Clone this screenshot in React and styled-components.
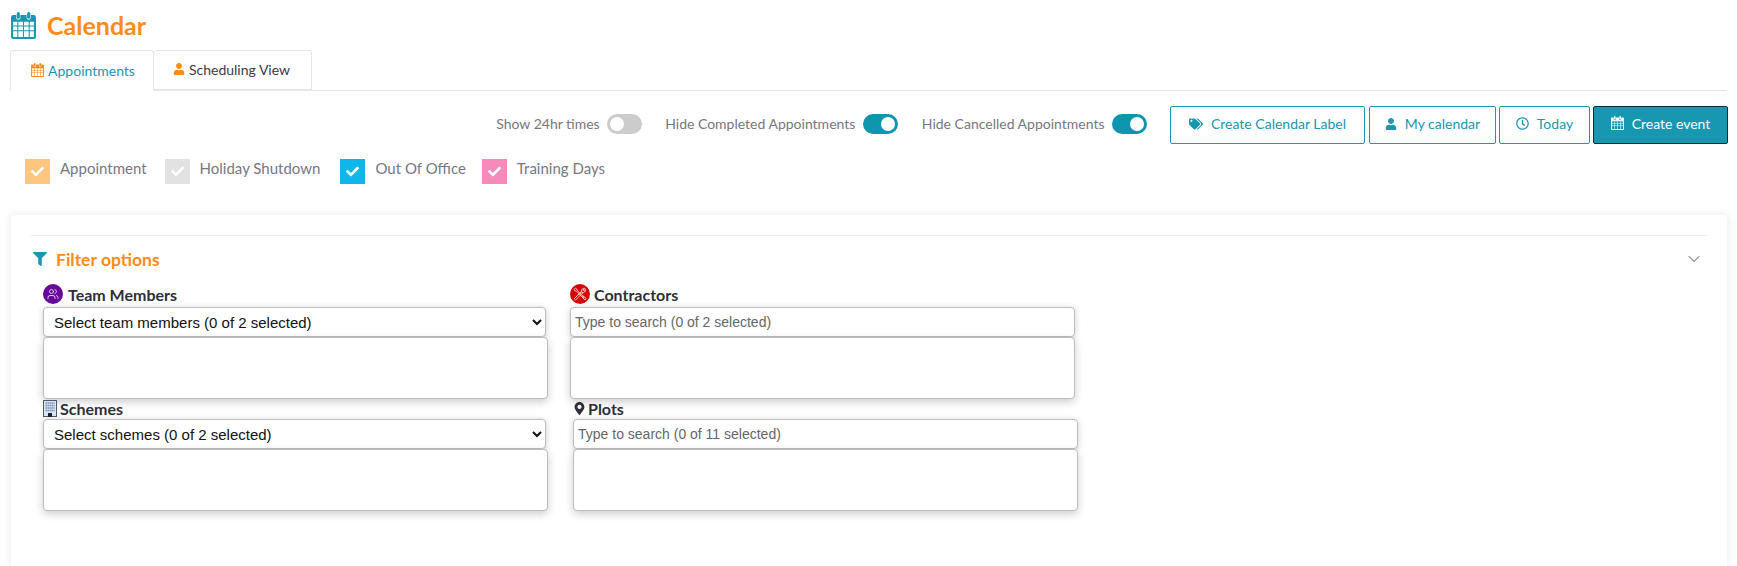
import styled, { createGlobalStyle } from 'styled-components';
import { FaTags, FaUser, FaRegClock, FaFilter, FaMapMarkerAlt, FaCheck } from 'react-icons/fa';
import { Users, ChevronDown } from 'lucide-react';

const GlobalStyle = createGlobalStyle`
    html, body {
        margin: 0;
        padding: 0;
        background: #FFF;
        font-family: Lato, "Open Sans", sans-serif;
    }
`;

const Page = styled.div`
    height: 566px;
    overflow: hidden;
    display: flex;
    flex-flow: column;
    padding: 0 10px 0 10px;
    box-sizing: border-box;
`;
const Header = styled.header`
    display: flex;
    align-items: center;
    gap: 11px;
    height: 50px;
    padding-left: 1px;
`;
const PageTitle = styled.h1`
    margin: 0;
    font-size: 25px;
    font-weight: 700;
    color: #FF8C1A;
`;
const Tabs = styled.nav`
    display: flex;
    height: 41px;
    box-sizing: border-box;
    border-bottom: 1px solid #E4E4EC;
`;
const Tab = styled.a`
    display: flex;
    align-items: center;
    justify-content: center;
    gap: 4px;
    box-sizing: border-box;
    width: ${props => props.$width}px;
    height: ${props => props.$active ? 41 : 40}px;
    padding: 0 ${props => props.$active ? 0 : 2}px 2px ${props => props.$active ? 2 : 0}px;
    border: 1px solid #E4E4EC;
    border-left-width: ${props => props.$active ? 1 : 0}px;
    border-bottom-width: ${props => props.$active ? 0 : 1}px;
    border-radius: 4px 4px 0 0;
    background: #FFF;
    font-size: 14px;
    color: ${props => props.$active ? '#1797B0' : '#3A3A46'};
    svg {
        color: #FF8C1A;
    }
`;
const Toolbar = styled.div`
    display: flex;
    justify-content: flex-end;
    align-items: center;
    height: 38px;
    margin-top: 15px;
    margin-right: -1px;
`;
const ToggleLabel = styled.label`
    display: flex;
    align-items: center;
    gap: 7.5px;
    padding-bottom: 2px;
    margin-right: ${props => props.$gap}px;
    font-size: 14px;
    color: #77777F;
    span {
        padding-bottom: 2px;
    }
`;
const Switch = styled.b`
    position: relative;
    display: block;
    width: 35px;
    height: 20px;
    border-radius: 10px;
    background: ${props => props.$on ? '#0E96AE' : '#CCC'};

    &::after {
        content: '';
        position: absolute;
        top: 3px;
        left: ${props => props.$on ? 18 : 3}px;
        width: 14px;
        height: 14px;
        border-radius: 50%;
        background: #FFF;
    }
`;
const Button = styled.button`
    display: flex;
    align-items: center;
    justify-content: center;
    gap: 8px;
    box-sizing: border-box;
    width: ${props => props.$width}px;
    height: 38px;
    margin-left: ${props => props.$gap}px;
    padding: 0 0 3px;
    border: 1px solid ${props => props.$primary ? '#0B2A33' : '#1797B0'};
    border-radius: 2px;
    background: ${props => props.$primary ? '#1797B0' : '#FFF'};
    color: ${props => props.$primary ? '#FFF' : '#1797B0'};
    font-family: inherit;
    font-size: 14px;
`;
const Legend = styled.div`
    display: flex;
    margin-top: 15px;
    padding-left: 15px;
    height: 25px;
`;
const LegendItem = styled.div`
    display: flex;
    align-items: center;
    gap: 10px;
    margin-right: ${props => props.$gap}px;
    font-size: 15px;
    color: #77777F;
    span {
        padding-bottom: 8px;
    }
`;
const Swatch = styled.i`
    display: flex;
    align-items: center;
    justify-content: center;
    width: 25px;
    height: 25px;
    background: ${props => props.$color};
    color: #FFF;
`;
const Card = styled.section`
    flex: 1;
    margin: 31px 0 0 1px;
    padding: 20px 20px 0;
    border-radius: 4px 4px 0 0;
    background: #FFF;
    box-shadow: 0 0 8px rgba(70, 60, 140, 0.12);
`;
const CardHead = styled.div`
    display: flex;
    align-items: center;
    gap: 9px;
    height: 47px;
    padding: 0 3px 0 2px;
    box-sizing: border-box;
    border-top: 1px solid #ECECF2;
    color: #1797B0;
`;
const CardTitle = styled.h3`
    flex: 1;
    margin: 0;
    font-size: 17.5px;
    font-weight: 700;
    color: #FF8C1A;
`;
const Filters = styled.div`
    display: grid;
    grid-template-columns: 505px 505px;
    column-gap: 22px;
    padding-left: 12px;
    margin-top: 1px;
`;
const Field = styled.div`
    display: flex;
    flex-flow: column;
    margin-left: ${props => props.$shift || 0}px;
    margin-right: ${props => -(props.$shift || 0)}px;
`;
const FieldLabel = styled.div`
    display: flex;
    align-items: center;
    gap: ${props => props.$gap}px;
    height: ${props => props.$height}px;
    padding-bottom: 2px;
    box-sizing: border-box;
    font-size: 16px;
    font-weight: 700;
    color: #2E2E38;
`;
const RoundIcon = styled.span`
    display: flex;
    align-items: center;
    justify-content: center;
    width: 20px;
    height: 20px;
    border-radius: 50%;
    background: ${props => props.$color};
    color: #FFF;
`;
const Select = styled.select`
    width: 503px;
    height: 30px;
    box-sizing: border-box;
    padding: 0 6px;
    border: 1px solid #BDBDBD;
    border-radius: 4px;
    background: #FFF;
    font-family: "Liberation Sans", Arial, sans-serif;
    font-size: 15px;
    color: #111;
    box-shadow: 0 1px 6px rgba(0, 0, 0, 0.2);
`;
const Search = styled.input`
    width: 100%;
    height: 30px;
    box-sizing: border-box;
    padding: 0 4px;
    border: 1px solid #BDBDBD;
    border-radius: 4px;
    background: #FFF;
    font-family: "Liberation Sans", Arial, sans-serif;
    font-size: 14px;
    box-shadow: 0 1px 6px rgba(0, 0, 0, 0.2);
    &::placeholder {
        color: #666;
        opacity: 1;
    }
`;
const ListBox = styled.div`
    height: 62px;
    box-sizing: border-box;
    border: 1px solid #BDBDBD;
    border-radius: 4px;
    background: #FFF;
    box-shadow: 0 3px 9px rgba(0, 0, 0, 0.2);
    margin-bottom: 1px;
`;

function CalendarIcon({ size, color }) {
    // fa-calendar, with the day cells cut out of the body
    return (
        <svg width={size} height={size * 1.08} viewBox="0 0 24 26" fill={color}>
            <path fillRule="evenodd" d="M2 3h3v2.500a2 2 0 0 0 4 0V3h6v2.500a2 2 0 0 0 4 0V3h3a2 2 0 0 1 2 2v19a2 2 0 0 1-2 2H2a2 2 0 0 1-2-2V5a2 2 0 0 1 2-2zM2 9.500v3.500h4V9.500zM7 9.500v3.500h4.500V9.500zM12.500 9.500v3.500H17V9.500zM18 9.500v3.500h4V9.500zM2 14v3.500h4V14zM7 14v3.500h4.500V14zM12.500 14v3.500H17V14zM18 14v3.500h4V14zM2 18.500V24h4v-5.500zM7 18.500V24h4.500v-5.500zM12.500 18.500V24H17v-5.500zM18 18.500V24h4v-5.500z" />
            <rect x="5.500" y="0" width="3" height="6.500" rx="1.500" />
            <rect x="15.500" y="0" width="3" height="6.500" rx="1.500" />
        </svg>
    );
}

function BuildingIcon() {
    return (
        <svg width="14" height="17" viewBox="0 0 14 17">
            <rect x="0.500" y="0.500" width="13" height="16" fill="#DCE6F2" stroke="#4A5A66" />
            <path d="M2.500 3h9M2.500 5.500h9M2.500 8h9M2.500 10.500h9" stroke="#5E7FB8" strokeWidth="1.400" strokeDasharray="1.300 0.700" />
            <rect x="5" y="13" width="4" height="4" fill="#1C2226" />
        </svg>
    );
}

function ToolsIcon() {
    // crossed wrench and screwdriver
    return (
        <svg width="14" height="14" viewBox="0 0 14 14" fill="none" stroke="#FFC9C9" strokeWidth="1" strokeLinecap="round" strokeLinejoin="round">
            <path d="M2.200 12.800 1.200 11.800 8.300 4.700 9.300 5.700zM8.300 4.700a2.800 2.800 0 0 1 3.500-3.300L10 3.200l.8.800 1.800-1.800a2.800 2.800 0 0 1-3.300 3.500" />
            <path d="M1.300 2.300 2.300 1.300 4 2.500 4.300 3.500 11 10.200 10.200 11 3.500 4.300 2.500 4zM10 9.200 9.200 10l2.800 3 1-1z" />
        </svg>
    );
}

function Toggle({ label, on, gap }) {
    return (
        <ToggleLabel $gap={gap}>
            <span>{label}</span>
            <Switch $on={on} />
        </ToggleLabel>
    );
}

const legend = [
    { label: 'Appointment', color: '#FFC680', gap: 18 },
    { label: 'Holiday Shutdown', color: '#E2E2E2', gap: 20 },
    { label: 'Out Of Office', color: '#10B5EA', gap: 16 },
    { label: 'Training Days', color: '#F48BBB', gap: 0 },
];

function App() {
    return (
        <Page>
            <GlobalStyle />
            <Header>
                <CalendarIcon size={25} color="#1797B0" />
                <PageTitle>Calendar</PageTitle>
            </Header>
            <Tabs>
                <Tab $active $width={144}><CalendarIcon size={13} color="#FF8C1A" />Appointments</Tab>
                <Tab $width={158}><FaUser size={12} />Scheduling View</Tab>
            </Tabs>
            <Toolbar>
                <Toggle label="Show 24hr times" gap={23} />
                <Toggle label="Hide Completed Appointments" on gap={24} />
                <Toggle label="Hide Cancelled Appointments" on gap={0} />
                <Button $gap={23} $width={195}><FaTags size={14} />Create Calendar Label</Button>
                <Button $gap={4} $width={127}><FaUser size={12} />My calendar</Button>
                <Button $gap={3} $width={91}><FaRegClock size={13} />Today</Button>
                <Button $gap={3} $width={135} $primary><CalendarIcon size={13} color="#FFF" />Create event</Button>
            </Toolbar>
            <Legend>
                {legend.map(item => (
                    <LegendItem key={item.label} $gap={item.gap}>
                        <Swatch $color={item.color}><FaCheck size={13} /></Swatch>
                        <span>{item.label}</span>
                    </LegendItem>
                ))}
            </Legend>
            <Card>
                <CardHead>
                    <FaFilter size={14} />
                    <CardTitle>Filter options</CardTitle>
                    <ChevronDown size={20} strokeWidth={1} color="#223" />
                </CardHead>
                <Filters>
                    <Field>
                        <FieldLabel $gap={5} $height={24}>
                            <RoundIcon $color="#66089A"><Users size={12} strokeWidth={1.5} /></RoundIcon>
                            Team Members
                        </FieldLabel>
                        <Select defaultValue="team"><option value="team">Select team members (0 of 2 selected)</option></Select>
                        <ListBox />
                    </Field>
                    <Field>
                        <FieldLabel $gap={4} $height={24}>
                            <RoundIcon $color="#D40606"><ToolsIcon /></RoundIcon>
                            Contractors
                        </FieldLabel>
                        <Search placeholder="Type to search (0 of 2 selected)" />
                        <ListBox />
                    </Field>
                    <Field>
                        <FieldLabel $gap={3} $height={19}>
                            <BuildingIcon />
                            Schemes
                        </FieldLabel>
                        <Select defaultValue="schemes"><option value="schemes">Select schemes (0 of 2 selected)</option></Select>
                        <ListBox />
                    </Field>
                    <Field $shift={3}>
                        <FieldLabel $gap={2} $height={19}>
                            <FaMapMarkerAlt size={13} />
                            Plots
                        </FieldLabel>
                        <Search placeholder="Type to search (0 of 11 selected)" />
                        <ListBox />
                    </Field>
                </Filters>
            </Card>
        </Page>
    );
}

export default App;
